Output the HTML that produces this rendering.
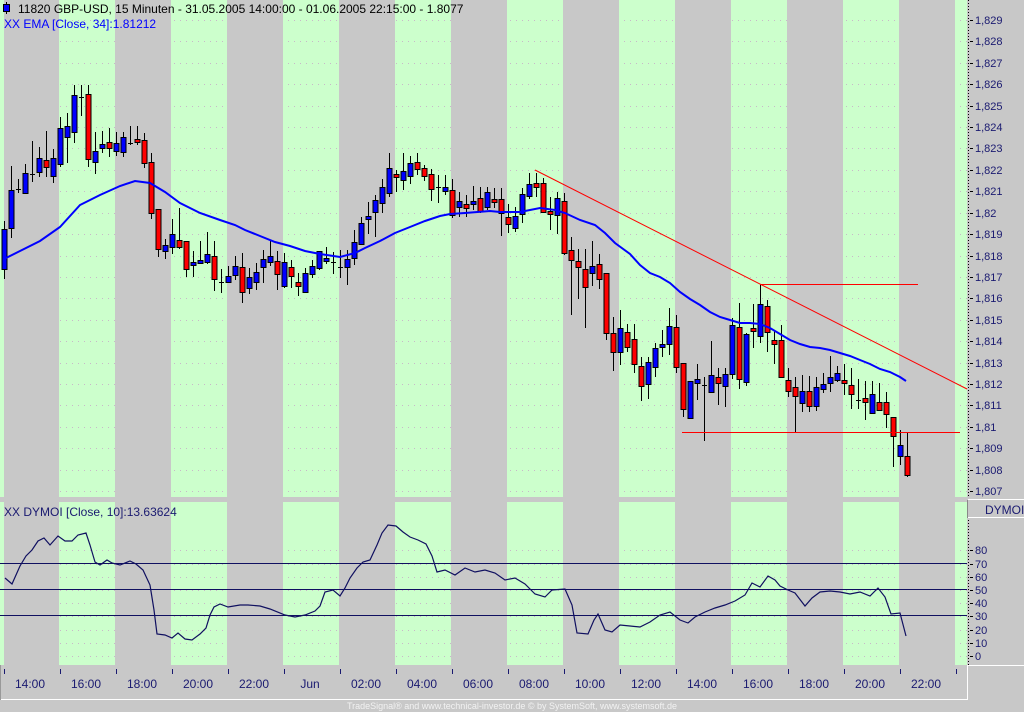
<!DOCTYPE html>
<html><head><meta charset="utf-8"><style>
html,body{margin:0;padding:0;background:#c8c8c8;width:1024px;height:712px;overflow:hidden}
svg{display:block;font-family:"Liberation Sans",sans-serif}
</style></head><body>
<svg id="s" width="1024" height="712" viewBox="0 0 1024 712" xmlns="http://www.w3.org/2000/svg">
<defs><clipPath id="gc"></clipPath></defs>
<rect x="0" y="0" width="1024" height="712" fill="#c8c8c8"/>
<g id="bands"></g>
<g id="grid" stroke="#c8b8c8" stroke-width="1" stroke-dasharray="1,5" clip-path="url(#gc)"></g>
<line x1="968.5" y1="0" x2="968.5" y2="497" stroke="#000" stroke-dasharray="1,2"/>
<line x1="968.5" y1="520" x2="968.5" y2="665" stroke="#000" stroke-dasharray="1,2"/>
<g id="axis" fill="#1a1a70" font-size="11"></g>
<line x1="968" y1="499.5" x2="1024" y2="499.5" stroke="#fff"/>
<line x1="968" y1="517.5" x2="1024" y2="517.5" stroke="#fff"/>
<line x1="967.5" y1="500" x2="967.5" y2="518" stroke="#888"/>
<text x="985" y="514" font-size="12" fill="#1a1a70">DYMOI</text>
<line x1="968" y1="665.5" x2="1024" y2="665.5" stroke="#fff"/>
<g stroke="#101060" stroke-width="1">
<line x1="0" y1="563.5" x2="967" y2="563.5"/>
<line x1="0" y1="589.5" x2="967" y2="589.5"/>
<line x1="0" y1="615.5" x2="967" y2="615.5"/>
</g>
<polyline id="ind" fill="none" stroke="#101060" stroke-width="1.2"/>
<g id="candles"></g>
<polyline id="ema" fill="none" stroke="#0000ff" stroke-width="2"/>
<g fill="#ff0000">
<rect x="760" y="284" width="158" height="1"/>
<rect x="682" y="432" width="278" height="1"/>
</g>
<line x1="535" y1="170" x2="967" y2="389" stroke="#ff0000" stroke-width="1"/>
<line x1="6.5" y1="2" x2="6.5" y2="14" stroke="#000"/>
<rect x="3.5" y="4.5" width="6" height="7" fill="#0000ff" stroke="#000"/>
<text x="18" y="13" font-size="12" fill="#000">11820  GBP-USD, 15 Minuten - 31.05.2005 14:00:00 - 01.06.2005 22:15:00 - 1.8077</text>
<text x="4" y="28" font-size="12" fill="#0000ff">XX EMA [Close, 34]:1.81212</text>
<text x="4" y="516" font-size="12" fill="#1a1a70">XX DYMOI [Close, 10]:13.63624</text>
<line x1="0" y1="699.5" x2="968" y2="699.5" stroke="#fff"/>
<line x1="967.5" y1="665" x2="967.5" y2="700" stroke="#fff"/>
<line x1="0.5" y1="665" x2="0.5" y2="700" stroke="#999"/>
<g id="time" fill="#1a1a70" font-size="12" text-anchor="middle"></g>
<text x="512" y="709" font-size="9" fill="#f2f2f2" text-anchor="middle">TradeSignal® and www.technical-investor.de © by SystemSoft, www.systemsoft.de</text>
</svg>
<script>
var NS="http://www.w3.org/2000/svg";
function el(p,t,a,txt){var e=document.createElementNS(NS,t);for(var k in a)e.setAttribute(k,a[k]);if(txt!=null)e.textContent=txt;document.getElementById(p).appendChild(e);return e;}
el("bands","rect",{x:0,y:0,width:4,height:497,fill:"#ccffcc"});
el("bands","rect",{x:0,y:502,width:4,height:163,fill:"#ccffcc"});
for(var x=59;x<968;x+=112){var w=Math.min(56,967-x);
 el("bands","rect",{x:x,y:0,width:w,height:497,fill:"#ccffcc"});
 el("bands","rect",{x:x,y:502,width:w,height:163,fill:"#ccffcc"});
 el("gc","rect",{x:x,y:0,width:w,height:665});}
for(var k=0;k<23;k++){var y=20+k*21.41;var v=(1829-k);var s="1,"+String(v).slice(1);s=s.replace(/0+$/,"");if(s.endsWith(","))s=s.slice(0,-1);
 el("grid","line",{x1:60,y1:Math.round(y)+.5,x2:967,y2:Math.round(y)+.5});
 el("axis","line",{x1:970,y1:Math.round(y)+.5,x2:973,y2:Math.round(y)+.5,stroke:"#000"});
 el("axis","text",{x:975,y:Math.round(y)+4},s);}
for(var k=0;k<=8;k++){var y=656-k*13.2;
 el("grid","line",{x1:60,y1:Math.round(y)+.5,x2:967,y2:Math.round(y)+.5});
 el("axis","line",{x1:970,y1:Math.round(y)+.5,x2:973,y2:Math.round(y)+.5,stroke:"#000"});
 el("axis","text",{x:975,y:Math.round(y)+4},String(k*10));}
var lab=["14:00","16:00","18:00","20:00","22:00","Jun","02:00","04:00","06:00","08:00","10:00","12:00","14:00","16:00","18:00","20:00","22:00"];
for(var i=0;i<lab.length;i++){el("time","text",{x:30+i*56,y:688},lab[i]);}
for(var x=4;x<968;x+=56){el("time","line",{x1:x+.5,y1:669,x2:x+.5,y2:674,stroke:"#1a1a70"});}
var C=[[221,279,229,269,'b'],[166,238,190,228,'b'],[179,193,189,189,'c'],[164,193,173,193,'b'],[141,182,174,174,'c'],[147,177,158,172,'b'],[131,177,160,167,'r'],[149,183,158,176,'b'],[117,167,128,164,'b'],[113,163,126,137,'b'],
[85,143,95,132,'b'],[85,116,97,97,'c'],[85,167,94,159,'r'],[132,174,151,162,'b'],[131,153,144,148,'b'],[128,157,142,148,'r'],[132,156,143,151,'b'],[132,157,137,152,'b'],[126,145,143,143,'c'],[126,145,139,142,'r'],
[133,168,140,163,'r'],[153,219,162,213,'r'],[209,257,209,249,'r'],[239,259,245,251,'b'],[219,254,234,247,'b'],[208,249,240,247,'r'],[241,277,241,269,'r'],[251,277,262,265,'b'],[241,264,260,263,'b'],[232,264,254,262,'b'],
[241,291,256,279,'r'],[269,293,282,282,'c'],[266,283,276,282,'b'],[256,280,266,275,'b'],[253,303,267,292,'r'],[268,294,277,288,'b'],[263,290,272,282,'b'],[250,283,259,267,'b'],[241,266,256,262,'b'],[251,290,261,274,'r'],
[253,288,262,286,'b'],[260,288,267,276,'r'],[273,296,282,286,'r'],[268,292,273,292,'b'],[260,278,266,274,'b'],[251,270,251,268,'b'],[247,264,258,261,'b'],[252,274,262,262,'c'],[250,278,267,267,'c'],[250,285,259,267,'b'],
[230,265,242,258,'b'],[217,244,223,244,'b'],[202,234,216,219,'b'],[195,237,200,212,'b'],[179,213,187,203,'b'],[153,197,168,193,'b'],[170,192,174,177,'r'],[153,190,171,180,'b'],[156,184,163,176,'b'],[153,175,162,169,'r'],
[165,181,168,176,'r'],[169,201,174,189,'r'],[175,203,187,187,'c'],[175,195,187,191,'b'],[179,218,190,215,'r'],[192,217,201,207,'b'],[195,217,204,208,'r'],[186,210,201,204,'b'],[187,213,198,211,'r'],[187,210,192,207,'b'],
[188,208,199,202,'r'],[188,236,199,213,'r'],[204,233,217,224,'r'],[207,232,216,228,'b'],[188,223,194,214,'b'],[173,199,184,196,'b'],[173,197,183,187,'r'],[178,212,183,212,'r'],[197,230,211,214,'r'],[192,234,198,215,'b'],
[193,255,201,253,'r'],[237,315,250,260,'r'],[249,299,261,267,'r'],[249,328,269,287,'r'],[241,286,266,273,'b'],[254,289,264,279,'r'],[273,340,273,333,'r'],[317,371,333,352,'r'],[310,365,328,352,'b'],[324,352,332,347,'r'],
[324,373,339,364,'r'],[357,401,366,386,'r'],[357,399,362,384,'b'],[343,377,348,367,'b'],[330,357,344,347,'b'],[308,355,326,344,'b'],[315,373,327,367,'r'],[363,417,363,409,'r'],[381,419,381,418,'b'],[364,400,379,383,'b'],
[377,441,385,385,'c'],[341,393,375,392,'b'],[368,405,377,383,'r'],[368,407,374,386,'b'],[318,379,325,374,'b'],[303,389,327,379,'r'],[333,386,334,382,'b'],[304,348,328,331,'r'],[284,343,304,336,'b'],[300,352,306,332,'r'],
[330,364,340,344,'r'],[325,377,340,377,'r'],[368,397,380,391,'r'],[377,432,387,396,'r'],[375,412,391,403,'b'],[376,412,391,406,'r'],[377,411,387,406,'b'],[373,393,384,389,'b'],[356,392,377,383,'b'],[366,382,373,380,'b'],
[364,395,380,383,'r'],[368,409,385,394,'r'],[379,409,400,400,'c'],[381,420,398,402,'r'],[381,413,394,413,'b'],[383,410,402,410,'r'],[392,428,402,414,'r'],[417,467,417,436,'r'],[430,465,445,456,'b'],[433,477,456,475,'r']];
for(var i=0;i<C.length;i++){var c=C[i];var x=4+7*i;
 el("candles","line",{x1:x+.5,y1:c[0],x2:x+.5,y2:c[1],stroke:"#000"});
 if(c[4]=='c'){el("candles","line",{x1:x-2,y1:c[2]+.5,x2:x+3,y2:c[2]+.5,stroke:"#000"});}
 else{var h=Math.max(2,c[3]-c[2]);el("candles","rect",{x:x-2,y:c[2]+.5,width:5,height:h,fill:c[4]=='b'?"#0000ff":"#ff0000",stroke:"#000"});}}
var E=[[4,259],[20,251],[40,241],[60,227],[80,205],[100,195],[120,186],[135,181],[150,183],[165,192],[180,203],[200,213],[220,220],[235,225],[245,230],[260,236],[275,242],[290,246],[305,251],[320,254],[340,257],[355,253],[365,248],[380,241],[395,233],[410,227],[425,221],[440,216],[450,214],[465,213],[490,211],[500,212],[520,212],[540,208],[555,210],[565,213],[580,220],[595,225],[605,233],[615,243],[630,254],[640,265],[650,273],[660,277],[670,283],[680,292],[690,299],[700,305],[710,312],[720,317],[730,320],[740,323],[750,323],[760,324],[770,328],[780,334],[790,340],[800,344],[810,347],[820,348],[830,350],[840,353],[850,356],[860,360],[870,364],[880,369],[890,372],[900,377],[906,381]];
document.getElementById("ema").setAttribute("points",E.map(function(p){return p.join(",")}).join(" "));
var I=[[5,578],[12,584],[20,566],[26,556],[32,550],[38,541],[44,538],[50,545],[58,536],[65,541],[72,541],[78,535],[86,533],[90,545],[95,562],[100,565],[107,560],[112,563],[120,565],[130,561],[136,564],[143,570],[150,585],[154,610],[157,634],[165,635],[172,638],[178,633],[185,639],[192,640],[200,634],[206,628],[210,615],[214,607],[220,604],[228,607],[240,605],[248,605],[260,606],[270,609],[285,615],[295,617],[305,615],[315,611],[320,606],[325,592],[333,590],[340,596],[345,588],[350,578],[357,568],[363,562],[370,560],[377,545],[382,533],[388,525],[396,526],[403,532],[410,537],[418,540],[426,544],[432,556],[437,572],[445,570],[455,575],[465,568],[475,572],[485,570],[495,573],[505,580],[515,578],[525,584],[535,594],[545,597],[552,590],[565,589],[572,605],[577,633],[588,634],[594,620],[598,614],[605,630],[612,632],[620,625],[630,626],[640,627],[650,622],[660,615],[670,612],[680,620],[688,623],[695,617],[705,612],[715,608],[725,605],[735,601],[745,595],[752,583],[760,587],[768,576],[775,580],[780,586],[788,590],[795,593],[805,606],[812,598],[820,592],[830,591],[840,592],[850,594],[860,592],[870,596],[878,588],[885,597],[891,614],[900,613],[906,636]];
document.getElementById("ind").setAttribute("points",I.map(function(p){return p.join(",")}).join(" "));
</script>
</body></html>
